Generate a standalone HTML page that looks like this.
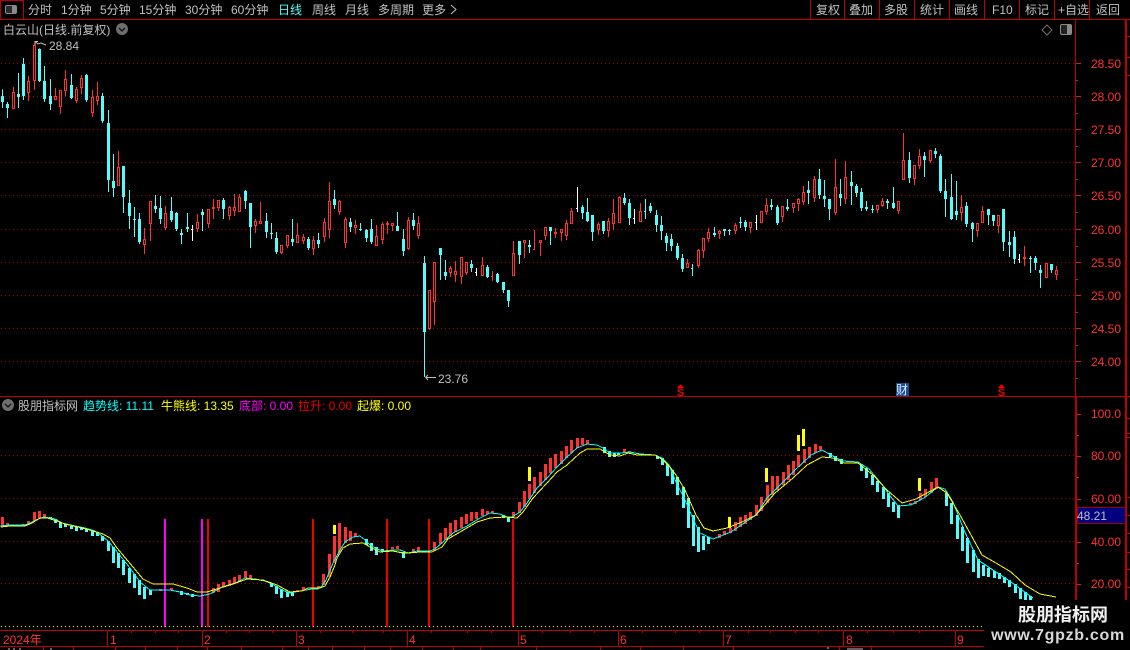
<!DOCTYPE html>
<html lang="zh"><head><meta charset="utf-8"><title>白云山</title>
<style>
html,body{margin:0;padding:0;background:#000;width:1130px;height:650px;overflow:hidden}
svg{display:block}
text{font-family:"Liberation Sans","WenQuanYi Zen Hei","Noto Sans CJK SC",sans-serif;font-size:12px}
.g{fill:#c0c0c0}.r{fill:#ff3232}
.l{stroke:#c00000;stroke-width:1;fill:none}
.d{stroke:#b00000;stroke-width:1;stroke-dasharray:1 3;fill:none}
.c1{stroke:#54fcfc;stroke-width:1;fill:none}.c3{stroke:#54fcfc;stroke-width:3;fill:none}
.r1{stroke:#ff3232;stroke-width:1;fill:none}.r3{stroke:#ff3232;stroke-width:3;fill:none}
.k1{stroke:#000;stroke-width:1;fill:none}
.w1{stroke:#fff;stroke-width:1;fill:none}
</style></head><body>
<svg width="1130" height="650" viewBox="0 0 1130 650" xmlns="http://www.w3.org/2000/svg" shape-rendering="crispEdges">
<rect width="1130" height="650" fill="#000"/>

<!-- toolbar -->
<path class="l" d="M0 19.5H1130M.5 0V19M0 .5H23M23.5 0V19M810.5 0V19M844.5 0V19M879.5 0V19M914.5 0V19M949.5 0V19M984.5 0V19M1019.5 0V19M1054.5 0V19M1089.5 0V19"/>
<rect x="5.5" y="5.5" width="11" height="8" rx="1.5" fill="#2a2a2a" stroke="#8a8a8a" shape-rendering="auto"/>
<rect x="12" y="6" width="4" height="7" fill="#8a8a8a"/>
<g class="g">
<text x="28" y="14">分时</text>
<text x="61" y="14">1分钟</text>
<text x="100" y="14">5分钟</text>
<text x="139" y="14">15分钟</text>
<text x="185" y="14">30分钟</text>
<text x="231" y="14">60分钟</text>
<text x="278" y="14" style="fill:#54fcfc">日线</text>
<text x="312" y="14">周线</text>
<text x="345" y="14">月线</text>
<text x="378" y="14">多周期</text>
<text x="422" y="14">更多</text>
<text x="816" y="14">复权</text>
<text x="849" y="14">叠加</text>
<text x="884" y="14">多股</text>
<text x="920" y="14">统计</text>
<text x="954" y="14">画线</text>
<text x="992" y="14">F10</text>
<text x="1025" y="14">标记</text>
<text x="1058" y="14">+自选</text>
<text x="1096" y="14">返回</text>
<text x="3" y="34">白云山(日线.前复权)</text>
<text x="49" y="50">28.84</text>
<text x="438" y="383">23.76</text>
<text x="18" y="410">股朋指标网</text>
</g>
<path d="M451 5L456 9.5L451 14" fill="none" stroke="#c0c0c0" shape-rendering="auto"/>
<circle cx="122" cy="29" r="6" fill="#6e6e6e" shape-rendering="auto"/>
<path d="M119 28l3 3l3-3" fill="none" stroke="#111" stroke-width="1.3" shape-rendering="auto"/>
<circle cx="8" cy="405" r="6" fill="#6e6e6e" shape-rendering="auto"/>
<path d="M5 404l3 3l3-3" fill="none" stroke="#111" stroke-width="1.3" shape-rendering="auto"/>
<path d="M1047 25l5 5l-5 5l-5-5z" fill="none" stroke="#707070" shape-rendering="auto"/>
<rect x="1060.5" y="24.5" width="11" height="10" rx="1.5" fill="#222" stroke="#8a8a8a" shape-rendering="auto"/>
<rect x="1067" y="25" width="4" height="9" fill="#8a8a8a"/>

<!-- high/low arrows -->
<path d="M35 47V41.5H38M35 41.5L38 44L41 43L46 45" fill="none" stroke="#c0c0c0" shape-rendering="auto"/>
<path d="M436 377.5H425.5M425.5 377.5L428 375M425.5 377.5L428 380" fill="none" stroke="#c0c0c0" shape-rendering="auto"/>

<!-- main grid -->
<path class="d" d="M1 63.5H1075M1 96.5H1075M1 129.5H1075M1 162.5H1075M1 195.5H1075M1 229.5H1075M1 262.5H1075M1 295.5H1075M1 328.5H1075M1 361.5H1075"/>
<!-- lower grid -->
<path class="d" d="M1 455.5H1075M1 498.5H1075M1 541.5H1075M1 583.5H1075"/>

<!-- candles group A -->
<g transform="translate(0,40) scale(1,.333334)">
<path class="c1" d="M2.5 148V204M7.5 186V234M18.5 99V204M23.5 54V180M39.5 25V126M44.5 78V186M50.5 117V210M71.5 102V177M86.5 102V186M102.5 159V249M108.5 210V456M113.5 342V471M123.5 378V519M129.5 450V567M134.5 501V591M139.5 519V612M155.5 465V519M160.5 468V552M171.5 471V546M176.5 516V573M181.5 567V612M187.5 519V576M202.5 507V573M223.5 474V537M245.5 450V507M250.5 489V624M266.5 519V594M271.5 549V597M276.5 576V642"/>
<path class="c3" d="M2.5 168V186M7.5 192V204M18.5 162V171M23.5 72V168M39.5 27V123M44.5 123V177M50.5 168V192M71.5 135V174M86.5 105V180M102.5 168V243M108.5 249V420M113.5 423V444M123.5 378V471M129.5 489V528M134.5 537V540M139.5 537V606M155.5 498V507M160.5 504V537M171.5 513V540M176.5 519V567M181.5 579V585M187.5 561V567M202.5 516V525M223.5 480V507M245.5 453V483M250.5 489V561M266.5 543V576M271.5 579V582M276.5 594V636"/>
<path class="r1" d="M13.5 141V207M28.5 108V183M34.5 10V150M55.5 144V180M60.5 150V222M65.5 90V168M76.5 141V189M81.5 105V162M92.5 150V231M97.5 126V195M118.5 333V438M144.5 564V642M150.5 483V603M165.5 498V570M197.5 522V576M208.5 507V564M213.5 477V537M218.5 480V513M229.5 498V540M234.5 462V528M239.5 462V516M255.5 537V579M260.5 486V552"/>
<path class="r3" d="M13.5 156V207M28.5 123V159M34.5 15V123M55.5 168V180M60.5 150V201M65.5 117V153M76.5 147V183M81.5 114V144M92.5 171V219M97.5 168V183M118.5 381V438M144.5 597V615M150.5 483V552M165.5 519V564M197.5 546V567M208.5 507V552M213.5 501V507M218.5 480V504M229.5 501V528M234.5 501V513M239.5 471V516M255.5 543V558M260.5 543V552"/>
<path class="k1" d="M13.5 159V204M28.5 126V156M34.5 18V120M55.5 171V177M60.5 153V198M65.5 120V150M76.5 150V180M81.5 117V141M92.5 174V216M97.5 171V180M118.5 384V435M144.5 600V612M150.5 486V549M165.5 522V561M197.5 549V564M208.5 510V549M218.5 483V501M229.5 504V525M234.5 504V510M239.5 474V513M255.5 546V555M260.5 546V549"/>
<path class="w1" d="M192.5 555V603M191.5 567V570"/>
</g>

<!-- candles group B -->
<g transform="translate(280,170) scale(1,.333334)">
<path class="c1" d="M12.5 147V228M28.5 201V240M38.5 189V234M54.5 60V117M70.5 144V186M80.5 159V183M86.5 177V216M91.5 147V222M117.5 126V183M123.5 177V258M133.5 129V180M144.5 258V621M160.5 234V330M165.5 270V330M191.5 270V306M207.5 285V324M217.5 309V339M223.5 336V369M228.5 360V411M239.5 213V282M249.5 210V249M270.5 171V225"/>
<path class="c3" d="M12.5 207V216M28.5 207V234M38.5 210V222M54.5 87V105M70.5 156V171M80.5 177V180M86.5 180V204M91.5 177V216M117.5 168V183M123.5 207V243M133.5 150V168M144.5 279V486M160.5 234V255M165.5 306V318M191.5 282V294M207.5 291V321M217.5 312V336M223.5 336V360M228.5 360V393M239.5 213V255M249.5 225V231M270.5 171V183"/>
<path class="r1" d="M1.5 225V252M7.5 195V234M17.5 159V219M23.5 192V222M33.5 198V255M44.5 144V216M49.5 36V204M59.5 90V135M65.5 141V234M75.5 150V192M96.5 165V228M102.5 156V222M107.5 153V192M112.5 159V183M128.5 141V240M138.5 138V207M149.5 360V480M154.5 276V465M170.5 288V321M175.5 273V336M181.5 261V342M186.5 276V315M202.5 261V318M212.5 303V333M233.5 213V318M244.5 210V264M254.5 180V240M260.5 210V258M265.5 171V210M275.5 174V204"/>
<path class="r3" d="M1.5 225V249M7.5 195V228M17.5 195V219M23.5 201V213M33.5 210V237M44.5 156V201M49.5 93V180M59.5 93V126M65.5 147V219M75.5 165V174M96.5 198V228M102.5 162V210M107.5 159V165M112.5 159V168M128.5 150V237M138.5 159V198M149.5 360V477M154.5 276V396M170.5 294V309M175.5 303V315M181.5 261V321M186.5 276V309M202.5 285V318M233.5 249V318M244.5 210V219M260.5 210V219M265.5 171V198M275.5 186V192"/>
<path class="k1" d="M1.5 228V246M7.5 198V225M17.5 198V216M23.5 204V210M33.5 213V234M44.5 159V198M49.5 96V177M59.5 96V123M65.5 150V216M75.5 168V171M96.5 201V225M102.5 165V207M112.5 162V165M128.5 153V234M138.5 162V195M149.5 363V474M154.5 279V393M170.5 297V306M175.5 306V312M181.5 264V318M186.5 279V306M202.5 288V315M233.5 252V315M244.5 213V216M260.5 213V216M265.5 174V195"/>
<path class="r1" d="M253.5 237V240M211.5 318V321"/>
<path class="w1" d="M196.5 294V318M195.5 306V309"/>
</g>

<!-- candles group C -->
<g transform="translate(560,170) scale(1,.333334)">
<path class="c1" d="M22.5 105V147M27.5 84V156M32.5 135V213M43.5 153V192M64.5 69V105M69.5 87V165M85.5 87V147M90.5 99V129M96.5 120V186M101.5 138V210M106.5 189V243M111.5 192V243M117.5 219V270M122.5 252V306M132.5 282V318M154.5 171V201M164.5 177V198M169.5 177V195M180.5 141V174M185.5 150V183M211.5 87V120M217.5 105V165M227.5 87V123M248.5 33V102"/>
<path class="c3" d="M22.5 111V129M27.5 126V153M32.5 135V186M43.5 153V183M64.5 84V99M69.5 99V144M90.5 108V123M96.5 135V165M101.5 165V183M106.5 198V219M111.5 207V228M117.5 228V264M122.5 264V297M154.5 189V195M164.5 177V183M169.5 180V183M180.5 156V159M185.5 156V171M211.5 105V111M217.5 111V159M227.5 111V117M248.5 60V69"/>
<path class="r1" d="M1.5 177V213M6.5 150V210M11.5 114V162M38.5 156V195M48.5 144V201M53.5 87V180M59.5 78V159M80.5 99V156M127.5 267V294M138.5 237V294M143.5 204V264M148.5 174V216M159.5 180V207M175.5 159V192M190.5 156V189M201.5 123V159M206.5 84V135M222.5 108V156M233.5 99V129M238.5 84V123M243.5 48V105M254.5 18V96"/>
<path class="r3" d="M1.5 177V189M6.5 159V198M11.5 123V162M38.5 162V180M48.5 153V183M53.5 129V162M59.5 81V159M80.5 123V156M127.5 279V294M138.5 240V288M143.5 204V243M148.5 186V207M159.5 183V192M175.5 165V183M190.5 156V174M201.5 123V159M206.5 105V126M222.5 108V141M233.5 99V114M238.5 87V102M243.5 66V96M254.5 27V84"/>
<path class="k1" d="M1.5 180V186M6.5 162V195M11.5 126V159M38.5 165V177M48.5 156V180M53.5 132V159M59.5 84V156M80.5 126V153M127.5 282V291M138.5 243V285M143.5 207V240M148.5 189V204M159.5 186V189M175.5 168V180M190.5 159V171M201.5 126V156M206.5 108V123M222.5 111V138M233.5 102V111M238.5 90V99M243.5 69V93M254.5 30V81"/>
<path class="c1" d="M84.5 123V126M131.5 294V297"/>
<path class="w1" d="M17.5 51V126M16.5 114V117M74.5 117V162M73.5 144V147M196.5 135V180M195.5 156V159"/>
</g>

<!-- candles group D -->
<g transform="translate(800,120) scale(1,.333334)">
<path class="c1" d="M19.5 147V237M24.5 180V261M29.5 237V300M40.5 177V258M51.5 153V255M56.5 192V231M61.5 204V273M66.5 243V273M72.5 255V279M87.5 237V267M93.5 201V267M109.5 96V189M124.5 96V171M135.5 84V114M140.5 102V219M145.5 177V291M151.5 162V300M156.5 183V300M166.5 246V321M172.5 306V366M188.5 267V315M193.5 285V318M203.5 267V393M209.5 333V411M214.5 333V432M230.5 408V459M235.5 408V450M240.5 435V504M251.5 432V459"/>
<path class="c3" d="M19.5 177V225M24.5 228V237M29.5 237V267M40.5 222V234M51.5 186V198M56.5 198V219M61.5 216V264M66.5 261V267M72.5 267V270M87.5 243V249M93.5 249V264M109.5 120V174M124.5 108V120M135.5 93V102M140.5 108V213M145.5 213V237M151.5 231V297M156.5 273V285M166.5 258V312M172.5 309V327M188.5 267V285M193.5 285V303M203.5 267V366M209.5 366V375M214.5 351V417M230.5 414V417M235.5 414V429M240.5 450V459M251.5 432V450"/>
<path class="r1" d="M35.5 117V285M45.5 123V252M77.5 255V279M82.5 234V261M98.5 243V282M103.5 39V180M114.5 135V195M119.5 87V147M130.5 90V129M161.5 225V303M177.5 309V351M182.5 258V309M198.5 285V339M224.5 378V438M246.5 429V474M256.5 438V480"/>
<path class="r3" d="M35.5 201V279M45.5 171V237M77.5 255V270M82.5 243V258M98.5 243V273M103.5 120V180M114.5 135V177M119.5 108V138M130.5 90V123M161.5 261V279M177.5 309V333M182.5 273V309M198.5 285V318M224.5 411V417M246.5 429V474M256.5 450V465"/>
<path class="k1" d="M35.5 204V276M45.5 174V234M77.5 258V267M82.5 246V255M98.5 246V270M103.5 123V177M114.5 138V174M119.5 111V135M130.5 93V120M161.5 264V276M177.5 312V330M182.5 276V306M198.5 288V315M246.5 432V471M256.5 453V462"/>
<path class="w1" d="M219.5 402V429M218.5 417V420"/>
</g>

<!-- markers -->
<path d="M680.5 384L684 388H677z" fill="#f00000"/>
<text x="680.5" y="396" text-anchor="middle" style="font-size:11px;font-weight:bold;fill:#f00000">S</text>
<rect x="896" y="383" width="13" height="13" fill="#1d4b8f"/>
<text x="896" y="394" style="fill:#d8f0ff">财</text>
<path d="M1001.5 384L1005 388H998z" fill="#f00000"/>
<text x="1001.5" y="396" text-anchor="middle" style="font-size:11px;font-weight:bold;fill:#f00000">S</text>

<!-- panel separators -->
<path d="M0 396.5H1130" stroke="#c00000" stroke-width="1" fill="none"/>

<!-- lower header -->
<text x="83" y="410" style="fill:#00ffff">趋势线: 11.11</text>
<text x="161" y="410" style="fill:#ffff00">牛熊线: 13.35</text>
<text x="239" y="410" style="fill:#ff00ff">底部: 0.00</text>
<text x="298" y="410" style="fill:#f00000">拉升: 0.00</text>
<text x="357" y="410" style="fill:#ffff00">起爆: 0.00</text>

<!-- vertical signals -->
<path d="M165 519V627M202 519V627" stroke="#ff00ff" stroke-width="2" fill="none"/>
<path d="M208 519V627M313 519V627M387 519V627M429 519V627M513 519V627" stroke="#f00000" stroke-width="2" fill="none"/>

<!-- histogram -->
<path class="r3" d="M2.5 517V527M7.5 523V525M23.5 524V526M28.5 521V525M34.5 512V521M39.5 511V518M44.5 514V517M160.5 589V591M171.5 588V590M213.5 588V593M218.5 584V592M223.5 582V587M229.5 580V586M234.5 577V584M239.5 575V582M245.5 571V578M250.5 575V578M297.5 590V592M303.5 587V590M318.5 586V588M323.5 574V585M329.5 554V577M334.5 536V563M339.5 523V553M345.5 527V543M350.5 531V541M355.5 533V537M392.5 547V549M397.5 546V549M413.5 549V552M418.5 547V552M434.5 542V551M440.5 533V544M445.5 528V540M450.5 523V536M455.5 520V532M461.5 517V528M466.5 514V524M471.5 512V521M476.5 512V519M482.5 509V516M487.5 511V514M492.5 511V513M513.5 512V517M519.5 502V513M524.5 491V507M529.5 484V499M534.5 477V493M540.5 472V486M545.5 464V480M550.5 458V473M555.5 454V468M561.5 451V464M566.5 446V458M571.5 440V453M577.5 438V448M582.5 438V445M587.5 440V444M624.5 449V452M629.5 451V453M719.5 534V538M724.5 531V535M730.5 528V533M735.5 522V531M740.5 517V527M745.5 515V524M750.5 512V520M756.5 505V516M761.5 497V511M767.5 485V503M772.5 476V495M777.5 476V490M783.5 472V485M788.5 465V480M793.5 461V475M798.5 455V467M804.5 449V463M809.5 447V458M815.5 444V453M820.5 446V450M910.5 503V505M915.5 501V504M920.5 493V500M925.5 489V497M931.5 482V493M936.5 478V489"/>
<path class="c3" d="M50.5 517V519M55.5 519V523M60.5 522V528M65.5 524V527M71.5 526V529M76.5 527V531M81.5 528V530M86.5 529V532M92.5 531V536M97.5 532V536M102.5 536V541M108.5 541V551M113.5 547V563M118.5 553V568M123.5 560V575M129.5 568V583M134.5 574V588M139.5 580V595M144.5 587V599M150.5 590V595M181.5 591V595M187.5 593V595M192.5 594V597M271.5 583V587M276.5 586V594M281.5 589V598M287.5 592V597M292.5 593V596M366.5 539V545M371.5 543V551M376.5 547V555M382.5 549V552M403.5 552V558M503.5 515V518M508.5 517V522M604.5 447V453M609.5 451V457M614.5 453V457M618.5 453V455M657.5 456V459M662.5 458V465M667.5 464V476M672.5 470V484M677.5 477V495M683.5 487V508M688.5 498V528M693.5 515V546M698.5 527V552M703.5 536V550M708.5 537V544M830.5 453V457M835.5 456V461M841.5 459V464M861.5 464V471M866.5 468V478M872.5 475V485M877.5 481V492M883.5 487V499M888.5 493V507M893.5 502V512M898.5 505V518M946.5 493V506M951.5 503V524M957.5 515V539M962.5 527V551M967.5 538V563M973.5 550V572M978.5 559V578M983.5 565V576M988.5 568V577M994.5 571V578M999.5 573V579M1004.5 577V583M1009.5 580V587M1015.5 584V593M1020.5 588V599M1025.5 592V600M1030.5 596V600"/>

<!-- trend line -->
<polyline fill="none" stroke="#00ffff" stroke-width="1" points="0,526 10,525 25,525 30,523 38,519 44,517 50,518 55,519 62,523 75,526 85,528 95,531 102,536 108,541 118,553 130,568 140,582 150,590 170,590 180,592 190,595 200,596 210,594 222,587 235,583 245,578 255,579 265,581 272,584 282,590 290,593 300,591 312,589 318,589 322,586 326,580 333,563 340,550 345,542 353,537 360,536 365,540 370,545 377,549 383,551 393,550 400,550 408,553 417,551 430,551 435,549 443,542 453,533 467,526 480,518 490,513 500,514 507,517 512,517 520,512 527,503 537,488 547,478 557,467 567,457 577,448 587,444 597,445 603,448 610,453 620,453 630,452 640,454 655,455 662,458 669,465 676,482 685,500 695,523 700,533 713,539 731,532 756,515 767,498 778,487 793,472 811,455 822,450 831,455 842,461 858,462 869,469 880,482 891,497 898,506 911,505 924,498 938,487 945,489 953,502 964,530 978,560 996,572 1011,582 1033,598"/>
<polyline fill="none" stroke="#ffff00" stroke-width="1" points="1,527 10,526 25,526 32,523 40,518 47,518 57,521 65,524 78,527 90,530 103,534 110,538 117,548 133,567 143,579 153,584 173,584 187,588 197,592 207,592 217,589 233,584 247,579 263,580 277,585 290,592 302,591 308,588 320,588 325,586 330,577 335,565 337,558 343,548 350,544 363,543 370,547 380,552 393,551 403,553 408,553 420,552 432,552 442,547 448,539 460,532 477,522 490,518 505,517 517,518 523,512 533,498 547,483 557,472 567,465 580,453 587,449 600,449 610,455 620,456 628,453 637,455 655,455 663,460 670,467 676,475 685,490 696,515 704,528 713,531 727,528 742,522 756,515 775,493 793,478 807,465 822,457 833,458 844,463 858,463 873,475 887,490 902,503 916,499 938,487 947,493 960,515 982,555 996,563 1011,572 1025,585 1040,594 1056,597"/>

<!-- yellow signals -->
<path d="M334.5 525V534M529.5 467V481M729.5 517V528M766.5 468V482M798.5 435V451M803.5 429V446M919.5 478V491" stroke="#ffff00" stroke-width="3" fill="none"/>

<!-- right axis -->
<path class="l" d="M1075.5 20V396"/>
<path d="M1076 397V600M1126 20V600" stroke="#c00000" stroke-width="2" fill="none"/>
<path class="r1" style="stroke:#d82020" d="M1076 63.5H1081M1076 80.5H1078M1076 96.5H1081M1076 113.5H1078M1076 129.5H1081M1076 146.5H1078M1076 162.5H1081M1076 179.5H1078M1076 195.5H1081M1076 212.5H1078M1076 229.5H1081M1076 246.5H1078M1076 262.5H1081M1076 279.5H1078M1076 295.5H1081M1076 312.5H1078M1076 328.5H1081M1076 345.5H1078M1076 361.5H1081M1076 378.5H1078M1077 414.5H1081M1077 435.5H1079M1077 456.5H1081M1077 477.5H1079M1077 499.5H1081M1077 542.5H1081M1077 563.5H1079M1077 584.5H1081"/>
<path class="l" d="M1127 36.5H1130M1127 57.5H1130M1127 75.5H1130M1127 418.5H1130M1127 433.5H1130M1127 437.5H1130M1127 497.5H1130M1127 515.5H1130M1127 533.5H1130M1127 552.5H1130M1127 569.5H1130M1127 587.5H1130"/>
<g class="r">
<text x="1091" y="68">28.50</text>
<text x="1091" y="101">28.00</text>
<text x="1091" y="134">27.50</text>
<text x="1091" y="167">27.00</text>
<text x="1091" y="200">26.50</text>
<text x="1091" y="234">26.00</text>
<text x="1091" y="267">25.50</text>
<text x="1091" y="300">25.00</text>
<text x="1091" y="333">24.50</text>
<text x="1091" y="366">24.00</text>
<text x="1091" y="418">100.0</text>
<text x="1091" y="460">80.00</text>
<text x="1091" y="503">60.00</text>
<text x="1091" y="546">40.00</text>
<text x="1091" y="588">20.00</text>
</g>
<rect x="1077.5" y="507.5" width="48" height="16" fill="#000080" stroke="#a00000"/>
<text x="1077" y="520" class="g">48.21</text>

<!-- bottom axis -->
<path d="M1 626.5H984" stroke="#ffff00" stroke-width="1" stroke-dasharray="1 3" fill="none"/>
<path d="M0 630.5H984M0 646.5H984" stroke="#c00000" stroke-width="1" fill="none"/>
<path class="l" d="M107.5 630V646M202.5 630V646M296.5 630V646M407.5 630V646M518.5 630V646M618.5 630V646M723.5 630V646M843.5 630V646M955.5 630V646M131.5 630V633M155.5 630V633M178.5 630V633M226.5 630V633M249.5 630V633M272.5 630V633M320.5 630V633M352.5 630V633M383.5 630V633M431.5 630V633M467.5 630V633M491.5 630V633M542.5 630V633M570.5 630V633M594.5 630V633M642.5 630V633M675.5 630V633M699.5 630V633M748.5 630V633M770.5 630V633M795.5 630V633M818.5 630V633M867.5 630V633M893.5 630V633M919.5 630V633M43.5 646V650M73.5 646V650M115.5 646V650M145.5 646V650M177.5 646V650M207.5 646V650M241.5 646V650M282.5 646V650M308.5 646V650M332.5 646V650M364.5 646V650M390.5 646V650M422.5 646V650M453.5 646V650M480.5 646V650M536.5 646V650M600.5 646V650M640.5 646V650M683.5 646V650M733.5 646V650M839.5 646V650M871.5 646V650"/>
<path d="M8 649h2M13 649h2M19 649h2M51 648v2M827 648h2M847 649h16" stroke="#c0c0c0" fill="none"/>
<g class="r">
<text x="3" y="644">2024年</text>
<text x="110" y="644">1</text>
<text x="204" y="644">2</text>
<text x="298" y="644">3</text>
<text x="409" y="644">4</text>
<text x="520" y="644">5</text>
<text x="620" y="644">6</text>
<text x="725" y="644">7</text>
<text x="846" y="644">8</text>
<text x="957" y="644">9</text>
</g>

<!-- watermark -->
<rect x="984" y="600" width="146" height="50" fill="#000"/>
<text x="1063" y="621" text-anchor="middle" style="font-size:18px;font-weight:bold;fill:#f0f0f0;font-family:'Liberation Sans','Noto Sans CJK SC',sans-serif">股朋指标网</text>
<text x="1058" y="640" text-anchor="middle" style="font-size:16px;font-weight:bold;fill:#d8d8d8;letter-spacing:.7px">www.7gpzb.com</text>
</svg>
</body></html>
